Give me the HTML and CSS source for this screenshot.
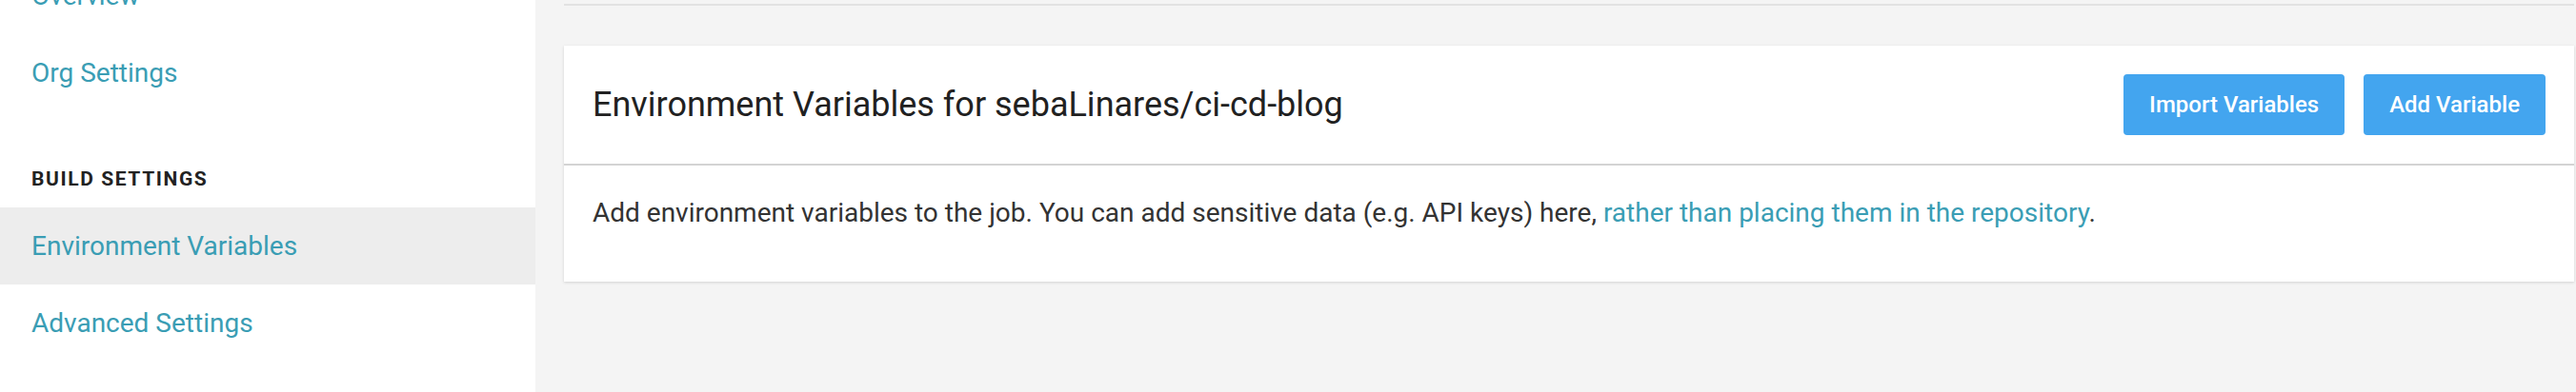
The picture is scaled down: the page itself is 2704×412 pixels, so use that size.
FILE: index.html
```html
<!DOCTYPE html>
<html lang="en">
<head>
<meta charset="utf-8">
<title>Environment Variables</title>
<link rel="stylesheet" href="styles.css">
</head>
<body>
<div class="layout">
  <aside class="sidebar">
    <nav class="nav">
      <a class="nav-item" href="#">Overview</a>
      <a class="nav-item" href="#">Org Settings</a>
      <div class="nav-heading">BUILD SETTINGS</div>
      <a class="nav-item active" href="#">Environment Variables</a>
      <a class="nav-item" href="#">Advanced Settings</a>
    </nav>
  </aside>
  <main class="main">
    <div class="top-rule"></div>
    <section class="card">
      <header class="card-header">
        <h1 class="card-title">Environment Variables for sebaLinares/ci-cd-blog</h1>
        <div class="actions">
          <button class="btn">Import Variables</button>
          <button class="btn">Add Variable</button>
        </div>
      </header>
      <div class="card-body">
        <p class="desc">Add environment variables to the job. You can add sensitive data (e.g. API keys) here, <a class="link" href="#">rather than placing them in the repository</a>.</p>
      </div>
    </section>
  </main>
</div>
</body>
</html>
```

FILE: styles.css
```css
html, body {
  margin: 0;
  padding: 0;
}
body {
  font-family: Roboto, "Liberation Sans", sans-serif;
  background: #f4f4f4;
  height: 412px;
  overflow: hidden;
}
.layout {
  display: flex;
  height: 412px;
}
.sidebar {
  width: 562px;
  flex: 0 0 562px;
  background: #ffffff;
  overflow: hidden;
}
.nav {
  display: flex;
  flex-direction: column;
  margin-top: -45px;
}
.nav-item {
  display: block;
  height: 81px;
  line-height: 81px;
  padding-left: 33px;
  font-size: 28px;
  color: #3a9db4;
  text-decoration: none;
}
.nav-item.active {
  background: #ededed;
}
.nav-heading {
  padding: 61px 33px 19px;
  font-size: 21px;
  line-height: 21px;
  font-weight: 700;
  letter-spacing: 1.6px;
  color: #222222;
}
.main {
  flex: 1;
  display: flex;
  flex-direction: column;
  padding: 0 2px 0 30px;
  background: #f4f4f4;
}
.top-rule {
  margin-top: 4px;
  height: 2px;
  background: #e2e2e2;
}
.card {
  margin-top: 42px;
  background: #ffffff;
  box-shadow: 0 1px 3px rgba(0, 0, 0, 0.14);
}
.card-header {
  display: flex;
  align-items: center;
  justify-content: space-between;
  height: 126px;
  box-sizing: border-box;
  padding: 0 30px;
  border-bottom: 2px solid #d3d3d3;
}
.card-title {
  margin: 0;
  font-size: 36px;
  font-weight: 400;
  color: #212121;
}
.actions {
  display: flex;
  gap: 20px;
}
.btn {
  height: 64px;
  padding: 0 27px;
  border: 0;
  border-radius: 4px;
  background: #43a5ef;
  color: #ffffff;
  font-family: Roboto, "Liberation Sans", sans-serif;
  font-size: 24px;
  font-weight: 500;
  cursor: pointer;
}
.card-body {
  padding: 30px 30px 52px;
}
.desc {
  margin: 0;
  font-size: 28px;
  line-height: 40px;
  color: #333333;
}
.link {
  color: #3a9db4;
  text-decoration: none;
}
```
